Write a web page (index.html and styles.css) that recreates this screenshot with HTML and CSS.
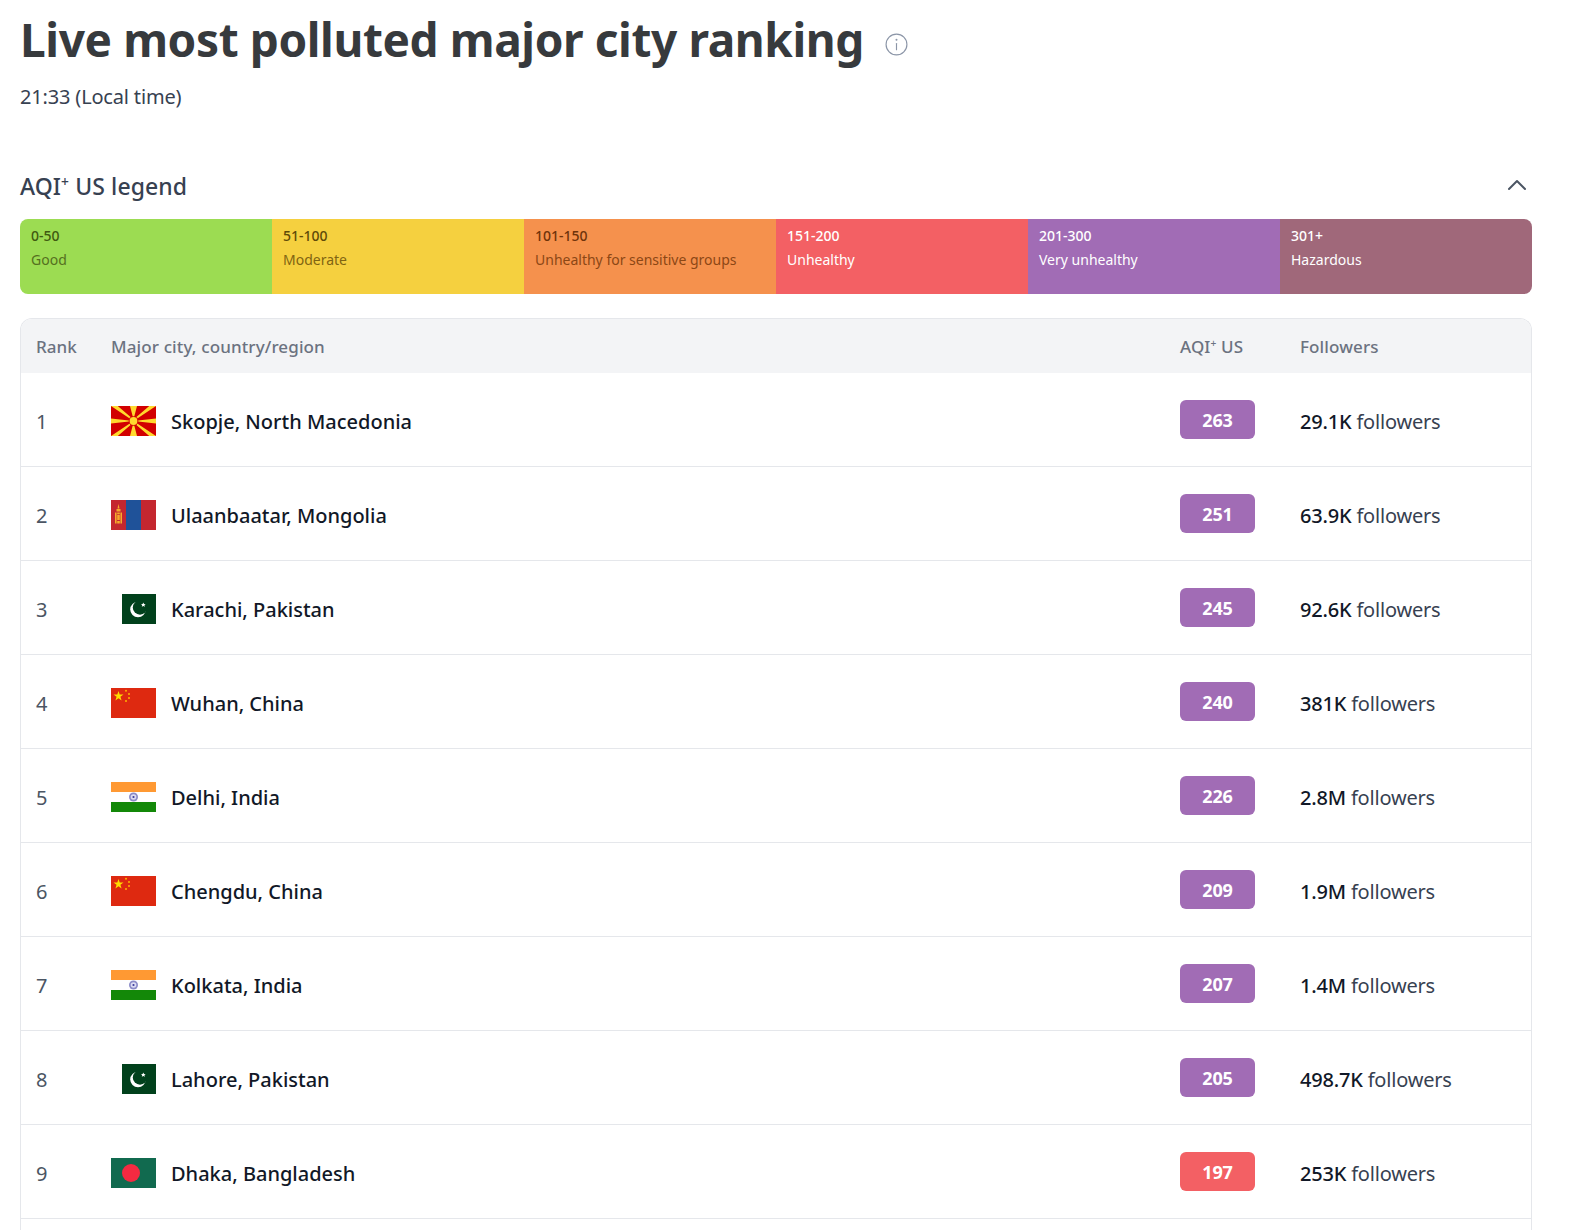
FILE: index.html
```html
<!DOCTYPE html>
<html lang="en">
<head>
<meta charset="utf-8">
<title>Live most polluted major city ranking</title>
<link rel="stylesheet" href="styles.css">
</head>
<body>
<svg class="defs" width="0" height="0" aria-hidden="true">
  <defs>
    <symbol id="mk" viewBox="0 0 45 30">
      <rect width="45" height="30" fill="#d20000"/>
      <path fill="#ffd92e" d="M0 0h6.750L22.500 13.500 19 0h7L22.500 13.500 38.250 0H45L22.500 15 45 30h-6.750L22.500 16.500 26 30h-7l3.500-13.500L6.750 30H0l22.500-15z"/>
      <path fill="#ffd92e" d="M0 12.500l22.500 2.500L0 17.500zM45 12.500l-22.500 2.500L45 17.500z"/>
      <circle cx="22.500" cy="15" r="4.800" fill="#d20000"/>
      <circle cx="22.500" cy="15" r="3.900" fill="#ffd92e"/>
    </symbol>
    <symbol id="mn" viewBox="0 0 45 30">
      <rect width="45" height="30" fill="#c4272f"/>
      <rect x="15" width="15" height="30" fill="#1f5299"/>
      <g fill="#f5ab2c">
        <path d="M7.500 4l1 4.500h-2z"/>
        <rect x="5.500" y="9" width="4" height="2.500"/>
        <rect x="4" y="12.500" width="1.600" height="11"/>
        <rect x="9.400" y="12.500" width="1.600" height="11"/>
        <rect x="6.200" y="12.500" width="2.600" height="1.800"/>
        <rect x="6.200" y="15" width="2.600" height="5"/>
        <rect x="6.200" y="21" width="2.600" height="2.500"/>
      </g>
    </symbol>
    <symbol id="pk" viewBox="0 0 45 30">
      <rect x="11" width="34" height="30" fill="#01411c"/>
      <circle cx="27" cy="15.500" r="7.800" fill="#fff"/>
      <circle cx="29" cy="13.500" r="7.200" fill="#01411c"/>
      <path fill="#fff" d="M32.300 8.500l.7 1.600 1.700-.1-1.300 1.100.5 1.700-1.600-.9-1.500.9.400-1.700-1.300-1.100 1.700.1z"/>
    </symbol>
    <symbol id="cn" viewBox="0 0 45 30">
      <rect width="45" height="30" fill="#de2910"/>
      <path fill="#ffde00" d="M7.500 3l1.200 3.600h3.800l-3.100 2.200 1.200 3.600-3.100-2.200-3.100 2.200 1.200-3.600-3.100-2.200h3.800z"/>
      <g fill="#ffb000">
        <circle cx="15" cy="2.800" r="1"/>
        <circle cx="18" cy="6" r="1"/>
        <circle cx="18" cy="10" r="1"/>
        <circle cx="15" cy="13" r="1"/>
      </g>
    </symbol>
    <symbol id="in" viewBox="0 0 45 30">
      <rect width="45" height="30" fill="#fff"/>
      <rect width="45" height="10" fill="#ff9933"/>
      <rect y="20" width="45" height="10" fill="#138808"/>
      <circle cx="22.500" cy="15" r="4.500" fill="#8c8cc8"/>
      <circle cx="22.500" cy="15" r="2.800" fill="#dcdcf2"/>
      <circle cx="22.500" cy="15" r="1.100" fill="#3a3a9c"/>
    </symbol>
    <symbol id="bd" viewBox="0 0 45 30">
      <rect width="45" height="30" fill="#116a4f"/>
      <circle cx="20" cy="15" r="9" fill="#f42a41"/>
    </symbol>
  </defs>
</svg>

<main class="page">
  <header class="title-block">
    <div class="title-row">
      <h1 class="title">Live most polluted major city ranking</h1>
      <svg class="info" viewBox="0 0 24 24" fill="none" stroke="#8b95a7" stroke-width="1.100" stroke-linecap="round">
        <circle cx="12" cy="12" r="10"/>
        <path d="M12 11v6"/>
        <circle cx="12" cy="7.500" r=".4" fill="#8b95a7"/>
      </svg>
    </div>
    <p class="time">21:33 (Local time)</p>
  </header>

  <section class="legend">
    <div class="legend-head">
      <h2 class="legend-title">AQI<sup class="plus">+</sup> US legend</h2>
      <svg class="chevron" viewBox="0 0 20 12" fill="none" stroke="#4b5563" stroke-width="2" stroke-linecap="round" stroke-linejoin="round">
        <path d="M2 10l8-8 8 8"/>
      </svg>
    </div>
    <div class="scale">
      <div class="seg seg-good"><span class="range">0-50</span><span class="level">Good</span></div>
      <div class="seg seg-moderate"><span class="range">51-100</span><span class="level">Moderate</span></div>
      <div class="seg seg-sensitive"><span class="range">101-150</span><span class="level">Unhealthy for sensitive groups</span></div>
      <div class="seg seg-unhealthy"><span class="range">151-200</span><span class="level">Unhealthy</span></div>
      <div class="seg seg-very"><span class="range">201-300</span><span class="level">Very unhealthy</span></div>
      <div class="seg seg-hazard"><span class="range">301+</span><span class="level">Hazardous</span></div>
    </div>
  </section>

  <div class="table-wrap">
    <table class="ranking">
      <colgroup>
        <col class="col-rank"><col class="col-city"><col class="col-aqi"><col class="col-fol">
      </colgroup>
      <thead>
        <tr><th>Rank</th><th>Major city, country/region</th><th>AQI<sup class="plus">+</sup> US</th><th>Followers</th></tr>
      </thead>
      <tbody>
        <tr><td class="rank">1</td><td><div class="city"><svg class="flag"><use href="#mk"/></svg><span>Skopje, North Macedonia</span></div></td><td><span class="badge badge-very">263</span></td><td class="fol"><b>29.1K</b> followers</td></tr>
        <tr><td class="rank">2</td><td><div class="city"><svg class="flag"><use href="#mn"/></svg><span>Ulaanbaatar, Mongolia</span></div></td><td><span class="badge badge-very">251</span></td><td class="fol"><b>63.9K</b> followers</td></tr>
        <tr><td class="rank">3</td><td><div class="city"><svg class="flag"><use href="#pk"/></svg><span>Karachi, Pakistan</span></div></td><td><span class="badge badge-very">245</span></td><td class="fol"><b>92.6K</b> followers</td></tr>
        <tr><td class="rank">4</td><td><div class="city"><svg class="flag"><use href="#cn"/></svg><span>Wuhan, China</span></div></td><td><span class="badge badge-very">240</span></td><td class="fol"><b>381K</b> followers</td></tr>
        <tr><td class="rank">5</td><td><div class="city"><svg class="flag"><use href="#in"/></svg><span>Delhi, India</span></div></td><td><span class="badge badge-very">226</span></td><td class="fol"><b>2.8M</b> followers</td></tr>
        <tr><td class="rank">6</td><td><div class="city"><svg class="flag"><use href="#cn"/></svg><span>Chengdu, China</span></div></td><td><span class="badge badge-very">209</span></td><td class="fol"><b>1.9M</b> followers</td></tr>
        <tr><td class="rank">7</td><td><div class="city"><svg class="flag"><use href="#in"/></svg><span>Kolkata, India</span></div></td><td><span class="badge badge-very">207</span></td><td class="fol"><b>1.4M</b> followers</td></tr>
        <tr><td class="rank">8</td><td><div class="city"><svg class="flag"><use href="#pk"/></svg><span>Lahore, Pakistan</span></div></td><td><span class="badge badge-very">205</span></td><td class="fol"><b>498.7K</b> followers</td></tr>
        <tr><td class="rank">9</td><td><div class="city"><svg class="flag"><use href="#bd"/></svg><span>Dhaka, Bangladesh</span></div></td><td><span class="badge badge-unhealthy">197</span></td><td class="fol"><b>253K</b> followers</td></tr>
        <tr class="row-empty"><td></td><td></td><td></td><td></td></tr>
      </tbody>
    </table>
  </div>
</main>
</body>
</html>
```
FILE: styles.css
```css
* { box-sizing: border-box; }
html, body { margin: 0; height: 100%; overflow: hidden; background: #fff; }
body { font-family: "Noto Sans", "Open Sans", sans-serif; color: #374151; }
.defs { position: absolute; }
.page { padding: 0 53px 0 20px; }

.title-block { height: 168px; padding-top: 5px; }
.title-row { display: flex; align-items: center; gap: 20px; height: 68px; }
.title { margin: 0; font-size: 46px; line-height: 68px; font-weight: 700; color: #373a3d; letter-spacing: -0.4px; }
.info { width: 25px; height: 25px; margin-top: 11px; flex: none; }
.time { margin: 10px 0 0; font-size: 20px; line-height: 28px; letter-spacing: -0.17px; color: #374151; }

.legend-head { display: flex; align-items: flex-start; justify-content: space-between; height: 51px; }
.legend-title { margin: 0; font-size: 23px; line-height: 36px; font-weight: 500; letter-spacing: 0.1px; color: #374151; }
.plus { font-size: 60%; line-height: 0; vertical-align: 0.55em; }
.chevron { width: 20px; height: 12px; margin: 11px 5px 0 0; }

.scale { display: flex; height: 75px; border-radius: 8px; overflow: hidden; }
.seg { flex: 1 1 0; padding: 5px 11px; display: flex; flex-direction: column; font-size: 14px; line-height: 24px; }
.range { font-weight: 500; }
.seg-good { background: #9cdc52; color: #55701f; }
.seg-moderate { background: #f5d03f; color: #806412; }
.seg-sensitive { background: #f5914d; color: #8c4715; }
.seg-unhealthy { background: #f36064; color: #fff; }
.seg-very { background: #a16cb5; color: #fff; }
.seg-hazard { background: #a0687a; color: #fff; }
.seg-good .range { color: #3f5a10; }
.seg-moderate .range { color: #5f4a08; }
.seg-sensitive .range { color: #6e330a; }

.table-wrap { margin-top: 24px; border: 1px solid #e5e7eb; border-bottom: 0; border-radius: 12px 12px 0 0; overflow: hidden; }
.ranking { width: 100%; table-layout: fixed; border-collapse: separate; border-spacing: 0; }
.col-rank { width: 90px; }
.col-aqi { width: 120px; }
.col-fol { width: 231px; }
.ranking th { height: 54px; padding: 0; background: #f3f4f6; text-align: left; font-size: 17px; font-weight: 500; color: #6b7280; letter-spacing: 0.12px; }
.ranking th:first-child { padding-left: 15px; letter-spacing: 0; }
.ranking td { height: 94px; padding: 2px 0 0; border-bottom: 1px solid #e5e7eb; font-size: 20px; }
.ranking .rank { padding: 4px 0 0 15px; color: #4b5563; }
.city { display: flex; align-items: center; gap: 15px; font-weight: 500; color: #111827; }
.city span { padding-top: 2px; }
.flag { width: 45px; height: 30px; flex: none; display: block; }
.badge { display: flex; align-items: center; justify-content: center; width: 75px; height: 39px; margin-top: -2px; border-radius: 6px; color: #fff; font-size: 18px; font-weight: 700; letter-spacing: -0.2px; }
.badge-very { background: #a16cb5; }
.badge-unhealthy { background: #f36064; }
.ranking .fol { padding-top: 4px; color: #374151; letter-spacing: -0.2px; }
.fol b { font-weight: 500; color: #111827; }
.row-empty td { border-bottom: 0; }
```
